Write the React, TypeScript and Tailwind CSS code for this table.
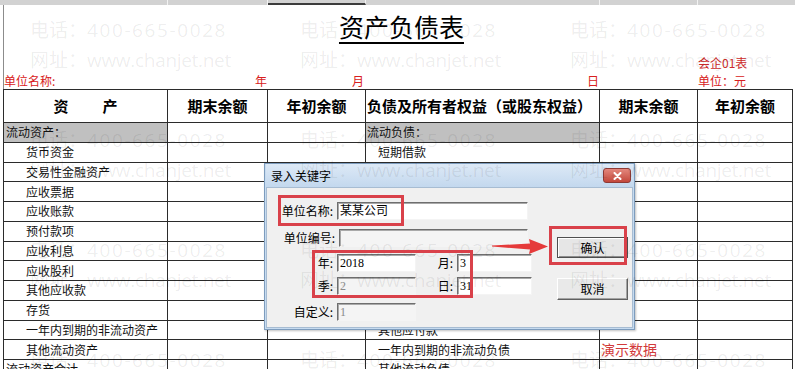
const cols = "grid grid-cols-[164px_100px_98px_234px_98px_95px]"

const assets = [
  { t: "流动资产：", head: true },
  { t: "货币资金" },
  { t: "交易性金融资产" },
  { t: "应收票据" },
  { t: "应收账款" },
  { t: "预付款项" },
  { t: "应收利息" },
  { t: "应收股利" },
  { t: "其他应收款" },
  { t: "存货" },
  { t: "一年内到期的非流动资产" },
  { t: "其他流动资产" },
  { t: "流动资产合计", total: true },
]

const debts = [
  { t: "流动负债：", head: true },
  { t: "短期借款" },
  { t: "交易性金融负债" },
  { t: "应付票据" },
  { t: "应付账款" },
  { t: "预收款项" },
  { t: "应付职工薪酬" },
  { t: "应交税费" },
  { t: "应付利息" },
  { t: "应付股利" },
  { t: "其他应付款" },
  { t: "一年内到期的非流动负债" },
  { t: "其他流动负债" },
]

const cell = "h-[19.75px] border-r border-b border-[#2b2b2b] flex items-center whitespace-nowrap overflow-hidden text-[12px] text-[#111]"

function Watermark() {
  return (
    <div className="absolute left-[30px] top-[15px] flex flex-col gap-[50px] pointer-events-none z-40 font-['Open_Sans','Noto_Sans_CJK_SC',sans-serif] text-[19px] text-black/[0.08]">
      {[0, 1, 2, 3].map((r) => (
        <div key={r} className="flex">
          {[0, 1, 2].map((c) => (
            <div key={c} className="w-[270px] flex flex-col">
              <div className="h-[30px] leading-[30px] whitespace-nowrap">
                电话：<span className="tracking-[1.6px]">400-665-0028</span>
              </div>
              <div className="h-[30px] leading-[30px] whitespace-nowrap">
                网址：<span className="tracking-[-0.3px]">www.chanjet.net</span>
              </div>
            </div>
          ))}
        </div>
      ))}
    </div>
  )
}

function Field({ value, width, disabled }: { value: string; width: string; disabled?: boolean }) {
  return (
    <div
      className={`${width} h-[18px] flex items-center pl-[2px] border border-t-[#6e6e6e] border-l-[#6e6e6e] border-b-[#f4f4f4] border-r-[#f4f4f4] shadow-[inset_1px_1px_0_#a9a9a9] font-['Liberation_Serif','Noto_Sans_CJK_SC',serif] text-[12px] ${
        disabled ? "bg-[#f4f4f4] text-[#8a8a8a]" : "bg-white text-black"
      }`}
    >
      {value}
    </div>
  )
}

function Dialog() {
  return (
    <div className="absolute left-[264px] top-[163px] w-[371px] h-[167px] border border-[#7d9cbd] bg-[#c6dbf0] px-[1px] pb-[1px] flex flex-col z-30 shadow-[1px_1px_2px_rgba(0,0,0,0.25)]">
      <div className="h-[23px] flex items-center justify-between pl-[5px] pr-[2px] bg-gradient-to-b from-[#dde9f6] to-[#c3d8ee]">
        <span className="text-[12px] text-black">录入关键字</span>
        <div className="w-[28px] h-[15px] rounded-[3px] border border-[#8e3a35] bg-gradient-to-b from-[#e3877d] to-[#c2463b] flex items-center justify-center">
          <svg width="9" height="8" viewBox="0 0 9 8">
            <path d="M1.5 1 L7.5 7 M7.5 1 L1.5 7" stroke="white" strokeWidth="2" strokeLinecap="round" />
          </svg>
        </div>
      </div>
      <div className="flex-1 bg-[#f0f0f0] border border-[#a7bcd2] flex text-[12px] text-black">
        <div className="flex flex-col pt-[14px]">
          <div className="flex items-center h-[18px] gap-[4px]">
            <span className="w-[66px] text-right">单位名称:</span>
            <Field value="某某公司" width="w-[191px]" />
          </div>
          <div className="flex items-center h-[18px] gap-[4px] mt-[9px]">
            <span className="w-[68px] text-right">单位编号:</span>
            <Field value="" width="w-[189px]" disabled />
          </div>
          <div className="flex items-center h-[18px] gap-[4px] mt-[7px]">
            <span className="w-[66px] text-right">年:</span>
            <Field value="2018" width="w-[79px]" />
            <span className="w-[33px] text-right">月:</span>
            <Field value="3" width="w-[75px]" />
          </div>
          <div className="flex items-center h-[18px] gap-[4px] mt-[5px]">
            <span className="w-[66px] text-right">季:</span>
            <Field value="2" width="w-[79px]" disabled />
            <span className="w-[33px] text-right">日:</span>
            <Field value="31" width="w-[75px]" />
          </div>
          <div className="flex items-center h-[18px] gap-[4px] mt-[8px]">
            <span className="w-[66px] text-right">自定义:</span>
            <Field value="1" width="w-[79px]" disabled />
          </div>
        </div>
        <div className="flex flex-col ml-[25px] pt-[49px] gap-[20px]">
          <div className="w-[71px] h-[21px] flex items-center justify-center bg-[#e6e6e6] border border-[#4f4f4f] shadow-[inset_1px_1px_0_#ffffff,inset_-1px_-1px_0_#8c8c8c]">
            确认
          </div>
          <div className="w-[71px] h-[22px] flex items-center justify-center bg-[#e9e9e9] border border-t-white border-l-white border-b-[#5f5f5f] border-r-[#5f5f5f] shadow-[inset_-1px_-1px_0_#a3a3a3]">
            取消
          </div>
        </div>
      </div>
    </div>
  )
}

function Marks() {
  return (
    <>
      <div className="absolute left-[278px] top-[195px] w-[126px] h-[31px] border-[3px] border-[#d9414a] z-50" />
      <div className="absolute left-[312px] top-[250px] w-[161px] h-[48px] border-[3px] border-[#d9414a] z-50" />
      <div className="absolute left-[549px] top-[226px] w-[78px] h-[39px] border-[3px] border-[#d9414a] z-50" />
      <svg className="absolute left-[488px] top-[236px] z-50" width="64" height="22" viewBox="488 236 64 22">
        <polygon points="492,245.5 530,243.5 529,239 548,246.5 529,254 530,249.5 492,246.5" fill="#e53a3a" />
      </svg>
    </>
  )
}

export default function App() {
  return (
    <div className="relative w-[795px] h-[369px] overflow-hidden bg-white font-['Noto_Sans_CJK_SC',sans-serif]">
      <div className={`${cols} h-[5px] bg-[#d2d2d2] pl-[4px]`}>
        <div className="border-r border-[#f2f2f2]" />
        <div className="border-r border-[#f2f2f2]" />
        <div className="border-r border-[#f2f2f2] border-b-2 border-b-[#3c3c3c]" />
        <div className="border-r border-[#f2f2f2]" />
        <div className="border-r border-[#f2f2f2]" />
        <div />
      </div>

      <div className="ml-[3px] border-l border-[#8c8c8c] w-[790px]">
        <div className="h-[48px] flex items-center justify-center pb-[4px] pl-[6px]">
          <h1 className="text-[25px] text-black underline decoration-[1.5px] underline-offset-[5px]">资产负债表</h1>
        </div>
        <div className={`${cols} h-[19px] text-[12px] text-[#cc2a2a]`}>
          <div />
          <div />
          <div />
          <div />
          <div />
          <div className="flex items-center">会企01表</div>
        </div>
        <div className={`${cols} h-[17px] text-[12px] text-[#d82020]`}>
          <div className="flex items-center">单位名称:</div>
          <div className="flex items-center justify-end pr-[1px]">年</div>
          <div className="flex items-center justify-end pr-[2px]">月</div>
          <div className="flex items-center justify-end pr-[1px]">日</div>
          <div />
          <div className="flex items-center">单位：元</div>
        </div>
      </div>

      <div className={`${cols} ml-[3px] w-[790px] border-l border-t border-[#2b2b2b]`}>
        <div className="h-[33px] border-r border-b border-[#2b2b2b] flex items-center justify-center gap-[34px] text-[15px] font-bold">
          <span>资</span>
          <span>产</span>
        </div>
        <div className="h-[33px] border-r border-b border-[#2b2b2b] flex items-center justify-center text-[15px] font-bold">期末余额</div>
        <div className="h-[33px] border-r border-b border-[#2b2b2b] flex items-center justify-center text-[15px] font-bold">年初余额</div>
        <div className="h-[33px] border-r border-b border-[#2b2b2b] flex items-center pl-[1px] text-[15px] font-bold whitespace-nowrap">
          负债及所有者权益（或股东权益）
        </div>
        <div className="h-[33px] border-r border-b border-[#2b2b2b] flex items-center justify-center text-[15px] font-bold">期末余额</div>
        <div className="h-[33px] border-r border-b border-[#2b2b2b] flex items-center justify-center text-[15px] font-bold">年初余额</div>

        {assets.map((a, i) => {
          const d = debts[i]
          return [
            <div key={`a${i}`} className={`${cell} ${a.head ? "bg-[#c0c0c0] pl-[2px]" : a.total ? "pl-[2px]" : "pl-[22px]"}`}>
              {a.t}
            </div>,
            <div key={`b${i}`} className={cell} />,
            <div key={`c${i}`} className={cell} />,
            <div key={`d${i}`} className={`${cell} ${d.head ? "bg-[#c0c0c0] pl-[1px]" : "pl-[12px]"}`}>
              {d.t}
            </div>,
            <div key={`e${i}`} className={`${cell} pl-[1px]`}>
              {i === 11 ? <span className="text-[14px] text-[#d23a3a]">演示数据</span> : null}
            </div>,
            <div key={`f${i}`} className={cell} />,
          ]
        })}
      </div>

      <Dialog />
      <Marks />
      <Watermark />
    </div>
  )
}
